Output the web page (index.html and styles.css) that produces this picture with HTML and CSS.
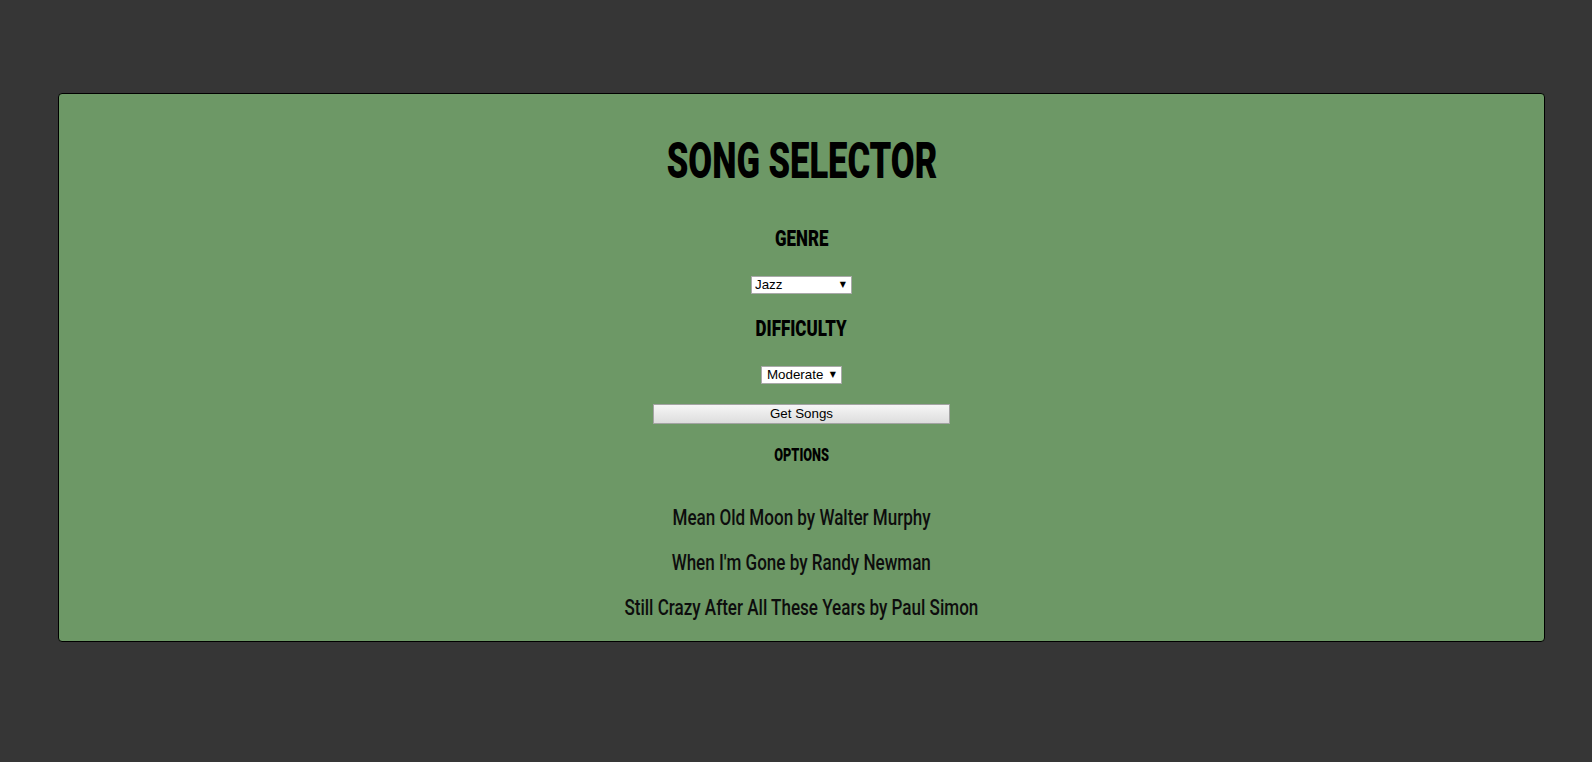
FILE: index.html
```html
<!DOCTYPE html>
<html lang="en">
<head>
<meta charset="utf-8">
<title>Song Selector</title>
<link rel="stylesheet" href="styles.css">
</head>
<body>
<div class="card">
  <h1 class="title"><span>Song Selector</span></h1>

  <h2 class="label"><span>Genre</span></h2>
  <div class="field">
    <span class="select-wrap">
      <select class="select genre">
        <option>Jazz</option>
        <option>Rock</option>
        <option>Folk</option>
      </select>
    </span>
  </div>

  <h2 class="label"><span>Difficulty</span></h2>
  <div class="field">
    <span class="select-wrap">
      <select class="select difficulty">
        <option>Moderate</option>
        <option>Easy</option>
        <option>Hard</option>
      </select>
    </span>
  </div>

  <button class="get-btn" type="button">Get Songs</button>

  <h3 class="options"><span>Options</span></h3>

  <ul class="songs">
    <li><span>Mean Old Moon by Walter Murphy</span></li>
    <li><span>When I'm Gone by Randy Newman</span></li>
    <li><span>Still Crazy After All These Years by Paul Simon</span></li>
  </ul>
</div>
</body>
</html>
```

FILE: styles.css
```css
html, body {
  background: #363636;
}

body {
  margin: 0;
  padding: 93px 47px 40px 58px;
}

.card {
  background: #6d9866;
  border: 1px solid #000;
  border-radius: 4px;
  padding: 42px 0 22px;
  text-align: center;
  color: #000;
}

.title,
.label,
.options {
  margin: 0;
  font-family: Roboto, "Liberation Sans", sans-serif;
  font-weight: 900;
  text-transform: uppercase;
}

.title span,
.label span,
.options span,
.songs span {
  display: inline-block;
}

.title {
  font-size: 50px;
  line-height: 50px;
}

.title span {
  transform: scaleX(0.69);
}

.label {
  margin-top: 42px;
  font-size: 22px;
  line-height: 22px;
}

.label span {
  transform: scaleX(0.77);
}

.field + .label {
  margin-top: 24px;
}

.field {
  display: flex;
  justify-content: center;
  margin-top: 26px;
}

.select-wrap {
  position: relative;
  display: block;
}

.select-wrap::after {
  content: "\25BC";
  position: absolute;
  right: 6px;
  top: 5px;
  font-family: "DejaVu Sans", sans-serif;
  font-size: 8px;
  line-height: 8px;
  color: #000;
  pointer-events: none;
}

.select {
  display: block;
  -webkit-appearance: none;
  appearance: none;
  height: 18px;
  margin: 0;
  padding: 0 0 0 3px;
  border: 1px solid #a9a9a9;
  border-radius: 0;
  background: #fff;
  color: #000;
  font-family: "Liberation Sans", Arial, sans-serif;
  font-size: 13.33px;
  line-height: 16px;
}

.genre {
  width: 101px;
}

.difficulty {
  width: 81px;
  padding-left: 5px;
}

.get-btn {
  display: block;
  width: 297px;
  height: 20px;
  margin: 20px auto 0;
  padding: 0;
  border: 1px solid #a3a3a3;
  border-radius: 0;
  background: linear-gradient(#f6f6f6, #dddddd);
  color: #000;
  font-family: "Liberation Sans", Arial, sans-serif;
  font-size: 13.33px;
  line-height: 18px;
}

.options {
  margin-top: 22px;
  font-size: 18px;
  line-height: 18px;
}

.options span {
  transform: scaleX(0.71);
}

.songs {
  list-style: none;
  margin: 43px 0 0;
  padding: 0;
  font-family: Roboto, "Liberation Sans", sans-serif;
  font-weight: 500;
  font-size: 22px;
  line-height: 22px;
  color: #0d0d0d;
}

.songs li + li {
  margin-top: 23px;
}

.songs span {
  transform: scaleX(0.775);
}
```
